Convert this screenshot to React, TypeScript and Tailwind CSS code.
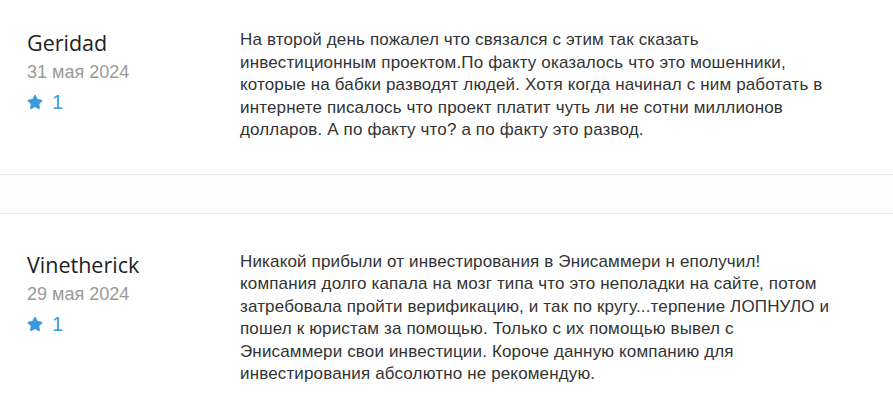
import { FaStar } from "react-icons/fa";

const reviews = [
  {
    name: "Geridad",
    date: "31 мая 2024",
    likes: 1,
    lines: [
      "На второй день пожалел что связался с этим так сказать",
      "инвестиционным проектом.По факту оказалось что это мошенники,",
      "которые на бабки разводят людей. Хотя когда начинал с ним работать в",
      "интернете писалось что проект платит чуть ли не сотни миллионов",
      "долларов. А по факту что? а по факту это развод.",
    ],
  },
  {
    name: "Vinetherick",
    date: "29 мая 2024",
    likes: 1,
    lines: [
      "Никакой прибыли от инвестирования в Энисаммери н еполучил!",
      "компания долго капала на мозг типа что это неполадки на сайте, потом",
      "затребовала пройти верификацию, и так по кругу...терпение ЛОПНУЛО и",
      "пошел к юристам за помощью. Только с их помощью вывел с",
      "Энисаммери свои инвестиции. Короче данную компанию для",
      "инвестирования абсолютно не рекомендую.",
    ],
  },
];

type Review = (typeof reviews)[number];

function ReviewCard({ review }: { review: Review }) {
  return (
    <div className="flex pl-[27px]">
      <div className="w-[213px] shrink-0">
        <div className="font-['Open_Sans',sans-serif] text-[21.5px] leading-[30px] text-[#222]">
          {review.name}
        </div>
        <div className="font-['Liberation_Sans',Arial,sans-serif] text-[18px] leading-[28px] text-[#999]">
          {review.date}
        </div>
        <div className="mt-[4px] flex items-center gap-[9px] font-['Liberation_Sans',Arial,sans-serif] text-[20px] leading-[24px] text-[#3a98dd]">
          <FaStar size={16} />
          <span>{review.likes}</span>
        </div>
      </div>
      <p className="mt-[1px] whitespace-nowrap font-['Liberation_Sans',Arial,sans-serif] text-[17px] leading-[22.5px] tracking-[0.15px] text-[#333]">
        {review.lines.map((line, i) => (
          <span key={i}>
            {line}
            {i < review.lines.length - 1 ? <br /> : null}
          </span>
        ))}
      </p>
    </div>
  );
}

export default function App() {
  return (
    <div className="min-h-[407px] bg-white">
      <div className="pt-[28px] pb-[32px]">
        <ReviewCard review={reviews[0]} />
      </div>
      <div className="h-[40px] border-y border-[#e6e6e6] bg-[#fdfdfd]" />
      <div className="pt-[36px] pb-[20px]">
        <ReviewCard review={reviews[1]} />
      </div>
    </div>
  );
}
